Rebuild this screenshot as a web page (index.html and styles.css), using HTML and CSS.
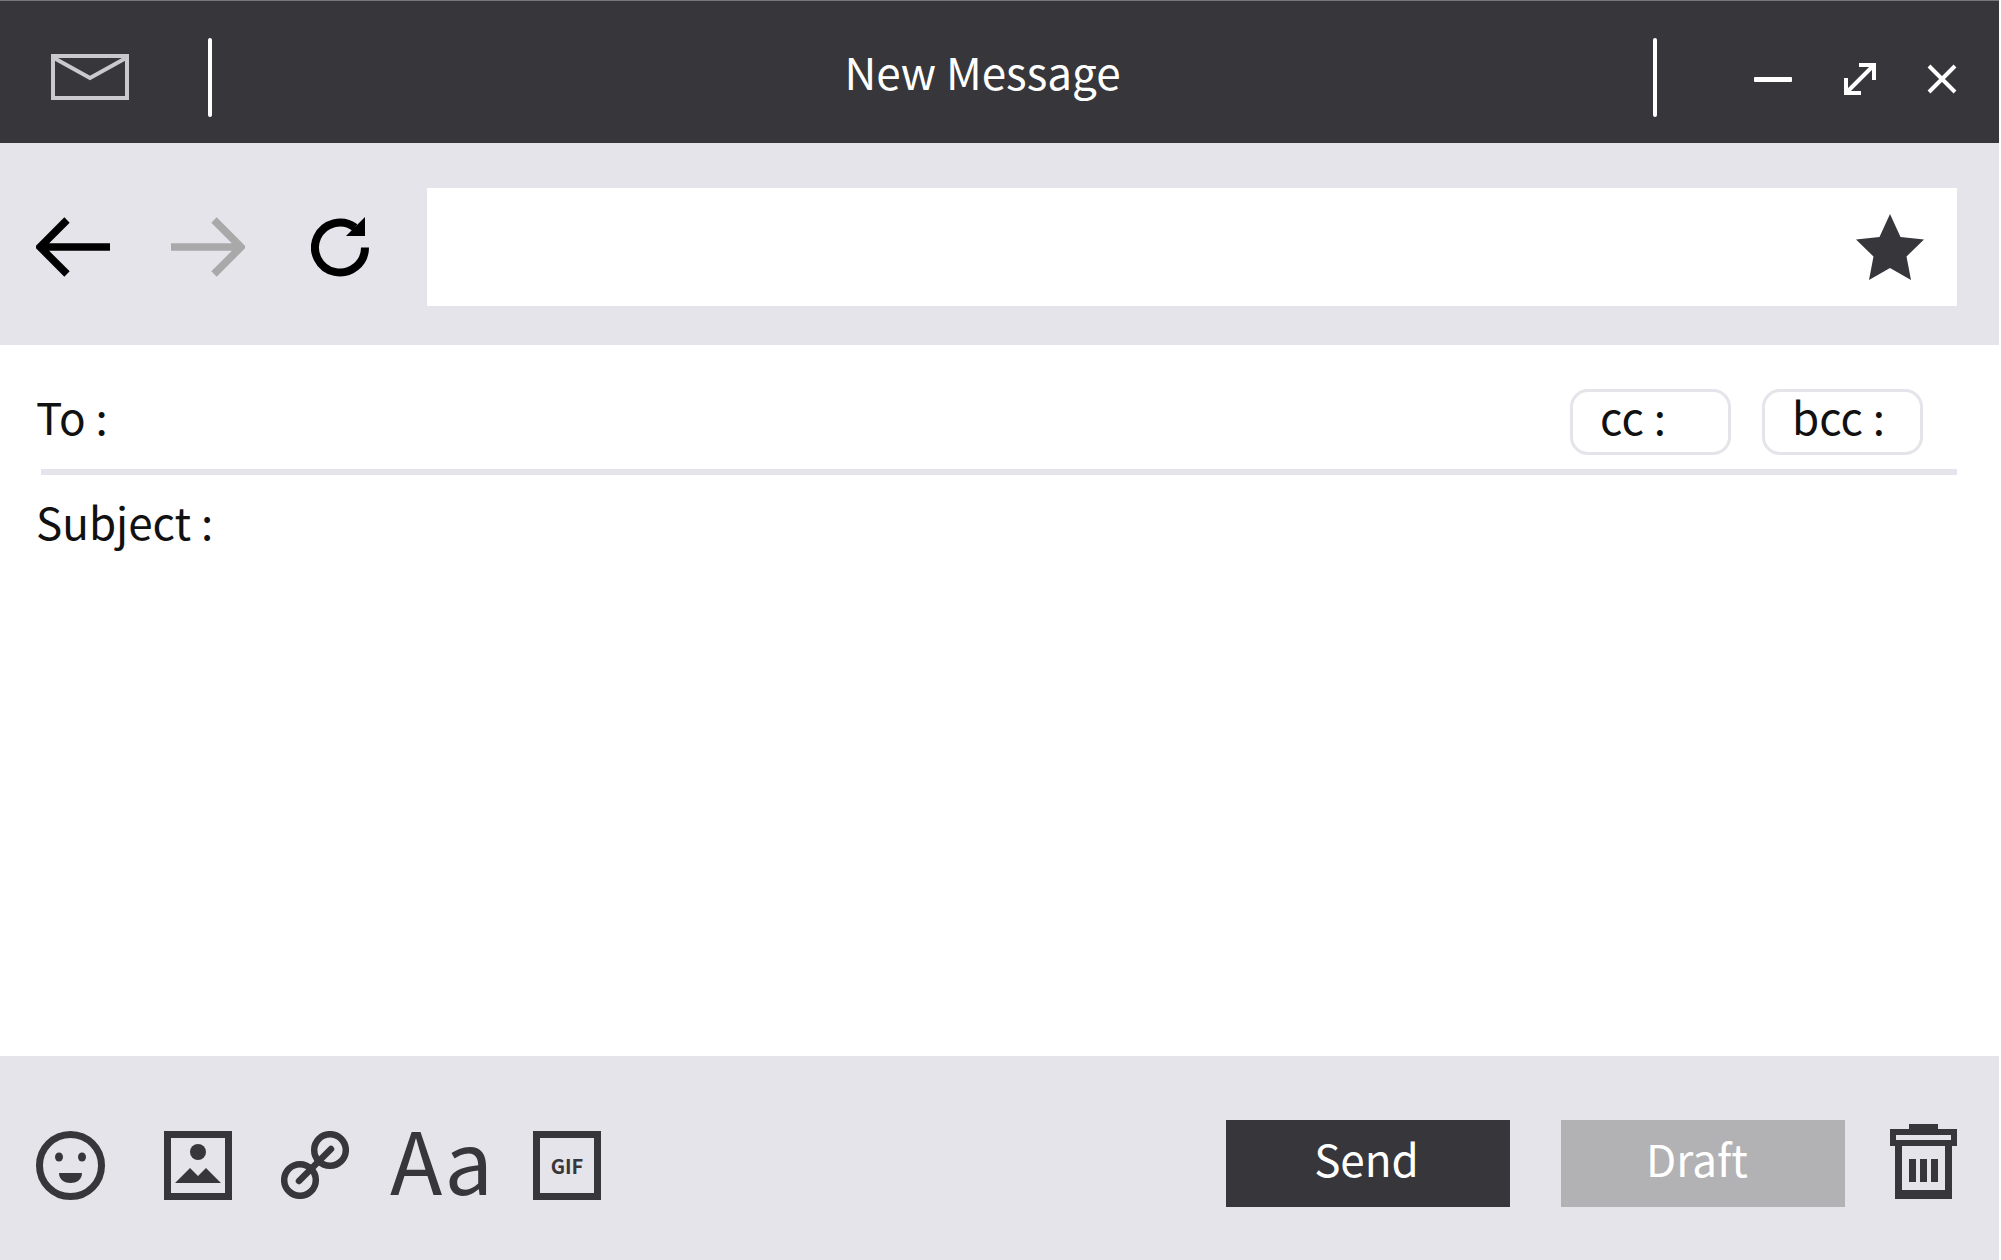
FILE: index.html
```html
<!DOCTYPE html>
<html lang="en">
<head>
    <meta charset="UTF-8">
    <meta name="viewport" content="width=device-width, initial-scale=1.0">
    <title>New Message</title>
    <link rel="stylesheet" href="styles.css">
</head>
<body>
    <div class="window">
        <header class="title-bar">
            <svg class="icon-mail" width="78" height="46" viewBox="0 0 78 46">
                <rect x="2" y="2" width="74" height="42" fill="none" stroke="#c9c9ce" stroke-width="4"/>
                <path d="M3 4 L39 24 L75 4" fill="none" stroke="#c9c9ce" stroke-width="4"/>
            </svg>
            <span class="divider divider-left"></span>
            <h1 class="title">New Message</h1>
            <span class="divider divider-right"></span>
            <svg class="icon-min" width="38" height="5" viewBox="0 0 38 5">
                <rect width="38" height="5" rx="1" fill="#fff"/>
            </svg>
            <svg class="icon-expand" width="32" height="32" viewBox="0 0 32 32">
                <path d="M4 28 L28 4 M15 2 H30 V17 M2 15 V30 H17" fill="none" stroke="#fff" stroke-width="4"/>
            </svg>
            <svg class="icon-close" width="30" height="30" viewBox="0 0 30 30">
                <path d="M2 2 L28 28 M28 2 L2 28" fill="none" stroke="#fff" stroke-width="4"/>
            </svg>
        </header>

        <nav class="nav-bar">
            <svg class="icon-back" width="74" height="60" viewBox="0 0 74 60">
                <path d="M74 30 H6 M31 3 L4 30 L31 57" fill="none" stroke="#000" stroke-width="7.500"/>
            </svg>
            <svg class="icon-forward" width="74" height="60" viewBox="0 0 74 60">
                <path d="M0 30 H68 M43 3 L70 30 L43 57" fill="none" stroke="#a9a9a9" stroke-width="7.500"/>
            </svg>
            <svg class="icon-reload" width="58" height="60" viewBox="0 0 58 60">
                <path d="M54 30.500 A25 25 0 1 1 44 10.500" fill="none" stroke="#000" stroke-width="8"/>
                <path d="M54 0 V19 H35 Z" fill="#000"/>
            </svg>
            <div class="url-box">
                <svg width="68" height="66" viewBox="0 0 68 66">
                    <path d="M34 0 L44.500 23 L68 25.500 L50.500 42.500 L55 66 L34 54 L13 66 L17.500 42.500 L0 25.500 L23.500 23 Z" fill="#36363b"/>
                </svg>
            </div>
        </nav>

        <main class="form">
            <div class="field-to">
                <span class="label">To :</span>
                <div class="copy-buttons">
                    <button class="btn-copy">cc :</button>
                    <button class="btn-copy">bcc :</button>
                </div>
            </div>
            <div class="field-subject">
                <span class="label">Subject :</span>
            </div>
        </main>

        <footer class="action-bar">
            <svg class="icon-smile" width="69" height="69" viewBox="0 0 69 69">
                <circle cx="34.500" cy="34.500" r="31" fill="none" stroke="#36363b" stroke-width="7"/>
                <ellipse cx="23" cy="26" rx="4" ry="4.500" fill="#36363b"/>
                <ellipse cx="46" cy="26" rx="4" ry="4.500" fill="#36363b"/>
                <path d="M23 42 H46 C46 49 40 52 34.500 52 C29 52 23 49 23 42 Z" fill="#36363b"/>
            </svg>
            <svg class="icon-image" width="68" height="69" viewBox="0 0 68 69">
                <rect x="3.500" y="3.500" width="61" height="62" fill="none" stroke="#36363b" stroke-width="7"/>
                <ellipse cx="34" cy="21" rx="8" ry="8" fill="#36363b"/>
                <path d="M11 52 L26 37 L34 45 L42 37 L57 52 Z" fill="#36363b"/>
            </svg>
            <svg class="icon-link" width="68" height="68" viewBox="0 0 68 68">
                <g fill="none" stroke="#36363b" stroke-width="6.500" stroke-linecap="round">
                    <circle cx="49" cy="19" r="15.800"/>
                    <circle cx="19" cy="49" r="15.800"/>
                    <path d="M18 50 L50 18"/>
                </g>
            </svg>
            <span class="icon-font">Aa</span>
            <div class="icon-gif">GIF</div>
            <button class="btn-action btn-send">Send</button>
            <button class="btn-action btn-draft">Draft</button>
            <svg class="icon-trash" width="67" height="76" viewBox="0 0 67 76">
                <path d="M19 6 V1 H48 V6 H67 V23 H62 V76 H5 V23 H0 V6 Z M6 12 V17 H61 V12 Z M12 23 V67 H55 V23 Z" fill="#36363b" fill-rule="evenodd"/>
                <rect x="19" y="36" width="7" height="23" fill="#36363b"/>
                <rect x="30" y="36" width="7" height="23" fill="#36363b"/>
                <rect x="41" y="36" width="7" height="23" fill="#36363b"/>
            </svg>
        </footer>
    </div>
</body>
</html>
```

FILE: styles.css
```css
* {
    box-sizing: border-box;
}
body {
    margin: 0;
    background-color: #fff;
    font-family: "Noto Sans CJK JP", "Noto Sans", sans-serif;
}
svg {
    display: block;
    flex-shrink: 0;
}
.window {
    width: 1999px;
    height: 1260px;
    display: flex;
    flex-direction: column;
    overflow: hidden;
}
.title-bar {
    height: 143px;
    flex-shrink: 0;
    padding-top: 10px;
    border-top: 1px solid #77777b;
    background-color: #36363b;
    display: flex;
    align-items: center;
}
.icon-mail {
    margin-left: 51px;
}
.divider {
    width: 4px;
    height: 79px;
    background-color: #fff;
    border-radius: 2px;
}
.divider-left {
    margin-left: 79px;
}
.title {
    flex: 1;
    margin: 0 0 12px;
    padding-left: 100px;
    text-align: center;
    color: #fff;
    font-size: 44px;
    font-weight: 400;
    line-height: 1;
}
.icon-min {
    margin-left: 97px;
    margin-top: 4px;
}
.icon-expand {
    margin-left: 52px;
    margin-top: 4px;
}
.icon-close {
    margin-left: 51px;
    margin-right: 42px;
    margin-top: 4px;
}
.nav-bar {
    height: 202px;
    flex-shrink: 0;
    background-color: #e4e4ea;
    display: flex;
    align-items: center;
    padding: 6px 42px 0 36px;
}
.icon-forward {
    margin-left: 61px;
}
.icon-reload {
    margin-left: 66px;
}
.url-box {
    flex: 1;
    height: 118px;
    margin-left: 58px;
    background-color: #fff;
    display: flex;
    align-items: center;
    justify-content: flex-end;
    padding-right: 33px;
}
.form {
    flex: 1;
    background-color: #fff;
    color: #111;
    padding: 0 42px 0 36px;
}
.label {
    font-size: 44px;
    line-height: 1;
}
.field-to {
    height: 130px;
    margin-left: 5px;
    padding-top: 30px;
    border-bottom: 6px solid #e4e4ea;
    display: flex;
    align-items: center;
    justify-content: space-between;
}
.field-to .label {
    margin-left: -5px;
    margin-top: -12px;
}
.copy-buttons {
    display: flex;
    gap: 31px;
    margin-right: 34px;
}
.btn-copy {
    width: 161px;
    height: 66px;
    padding: 0 0 12px 27px;
    background-color: #fff;
    border: 3px solid #e4e4ea;
    border-radius: 18px;
    color: #111;
    font-family: inherit;
    font-size: 44px;
    line-height: 1;
    text-align: left;
}
.field-subject {
    padding-top: 24px;
}
.action-bar {
    height: 204px;
    flex-shrink: 0;
    background-color: #e4e4ea;
    display: flex;
    align-items: flex-start;
    padding: 64px 42px 0 36px;
}
.icon-smile,
.icon-image,
.icon-link,
.icon-gif {
    margin-top: 11px;
}
.icon-image {
    margin-left: 59px;
}
.icon-link {
    margin-left: 49px;
}
.icon-font {
    margin-left: 41px;
    margin-top: -6px;
    width: 97px;
    color: #36363b;
    font-size: 86px;
    font-weight: 400;
    line-height: 88px;
}
.icon-gif {
    width: 68px;
    height: 69px;
    margin-left: 46px;
    border: 7px solid #36363b;
    color: #36363b;
    font-size: 20px;
    font-weight: 700;
    line-height: 55px;
    text-align: center;
}
.btn-action {
    width: 284px;
    height: 87px;
    border: none;
    color: #fff;
    font-family: inherit;
    font-size: 44px;
    font-weight: 400;
    line-height: 1;
}
.btn-send {
    margin-left: 625px;
    padding: 0 3px 12px 0;
    background-color: #36363b;
}
.btn-draft {
    margin-left: 51px;
    padding: 0 12px 12px 0;
    background-color: #b2b2b4;
}
.icon-trash {
    margin-left: 45px;
    margin-top: 3px;
}
```
